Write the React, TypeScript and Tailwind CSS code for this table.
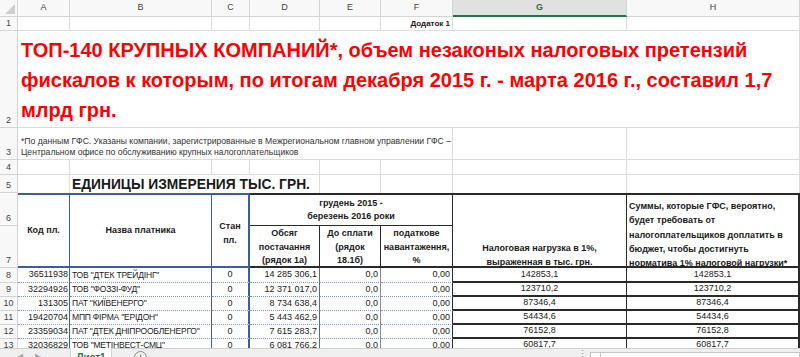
const head = "bg-[#f8f8f8] border-r border-b border-[#d4d4d4] text-[9px] text-[#444]";
const grid = "border-r border-b border-[#dcdcdc]";
const blue = "border-[#3d5d9c]";

const rows = [
  ["36511938", 'ТОВ "ДТЕК ТРЕЙДІНГ"', "0", "14 285 306,1", "0,0", "0,00", "142853,1", "142853,1"],
  ["32294926", 'ТОВ "ФОЗЗІ-ФУД"', "0", "12 371 017,0", "0,0", "0,00", "123710,2", "123710,2"],
  ["131305", 'ПАТ "КИЇВЕНЕРГО"', "0", "8 734 638,4", "0,0", "0,00", "87346,4", "87346,4"],
  ["19420704", 'МПП ФІРМА "ЕРІДОН"', "0", "5 443 462,9", "0,0", "0,00", "54434,6", "54434,6"],
  ["23359034", 'ПАТ "ДТЕК ДНІПРООБЛЕНЕРГО"', "0", "7 615 283,7", "0,0", "0,00", "76152,8", "76152,8"],
  ["32036829", 'ТОВ "МЕТІНВЕСТ-СМЦ"', "0", "6 081 766,2", "0,0", "0,00", "60817,7", "60817,7"],
];

function RowNum({ n }: { n: number }) {
  return <div className={`${head} flex items-end justify-center pb-[2px] leading-none`}>{n}</div>;
}

export default function App() {
  const cols = ["A", "B", "C", "D", "E", "F", "G", "H"];
  return (
    <div className="w-[800px] h-[357px] overflow-hidden bg-white flex flex-col font-['Liberation_Sans',Arial,sans-serif] text-[#1a1a1a]">
      <div className="h-[348px] shrink-0 overflow-hidden grid grid-cols-[18px_52px_142px_38px_70px_61px_72px_174px_173px] grid-rows-[17px_14px_97px_32px_15px_18px_33px_42px_15px_14px_14px_14px_14px_14px]">
        {/* column headers */}
        <div className={`${head} relative`}>
          <svg width="18" height="17" className="absolute inset-0">
            <polygon points="15,4 15,14 5,14" fill="#cfcfcf" />
          </svg>
        </div>
        {cols.map((c) =>
          c === "G" ? (
            <div key={c} className="bg-[#e1e1e1] border-r border-[#d4d4d4] border-b-2 border-b-[#217346] text-[9px] font-bold text-[#217346] flex items-center justify-center">
              {c}
            </div>
          ) : (
            <div key={c} className={`${head} flex items-center justify-center`}>
              {c}
            </div>
          )
        )}

        {/* row 1 */}
        <RowNum n={1} />
        <div className={grid} />
        <div className={grid} />
        <div className={grid} />
        <div className={grid} />
        <div className={grid} />
        <div className={`${grid} flex items-center justify-end pr-[2px] text-[8px] font-bold`}>Додаток 1</div>
        <div className={grid} />
        <div className={grid} />

        {/* row 2 */}
        <RowNum n={2} />
        <div className={`${grid} col-span-8 flex items-end pl-[3px] pb-[2px] text-[20px] leading-[30px] font-bold text-[#ff0000]`}>
          <p>
            ТОП-140 КРУПНЫХ КОМПАНИЙ*, объем незаконых налоговых претензий
            <br />
            фискалов к которым, по итогам декабря 2015 г. - марта 2016 г., составил 1,7
            <br />
            млрд грн.
          </p>
        </div>

        {/* row 3 */}
        <RowNum n={3} />
        <div className={`${grid} col-span-6 flex items-end pl-[3px] pb-px text-[8.6px] leading-[11px] text-[#333]`}>
          <p>
            *По данным ГФС. Указаны компании, зарегистрированные в Межрегиональном главном управлении ГФС –
            <br />
            Центральном офисе по обслуживанию крупных налогоплательщиков
          </p>
        </div>
        <div className={grid} />
        <div className={grid} />

        {/* row 4 */}
        <RowNum n={4} />
        {cols.map((c) => (
          <div key={c} className={grid} />
        ))}

        {/* row 5 */}
        <RowNum n={5} />
        <div className="border-r border-[#dcdcdc]" />
        <div className="col-span-3 border-r border-[#dcdcdc] flex items-end pl-[2px] text-[13.8px] leading-[17px] font-bold whitespace-nowrap">
          ЕДИНИЦЫ ИЗМЕРЕНИЯ ТЫС. ГРН.
        </div>
        <div className="border-r border-[#dcdcdc]" />
        <div className="border-r border-[#dcdcdc]" />
        <div className="border-r border-[#dcdcdc]" />
        <div className="border-r border-[#dcdcdc]" />

        {/* rows 6-7 table header */}
        <RowNum n={6} />
        <div className={`row-span-2 border-t-2 border-b-2 border-r ${blue} flex items-center justify-center text-[9px] font-bold`}>
          Код пл.
        </div>
        <div className={`row-span-2 border-t-2 border-b-2 border-r ${blue} flex items-center justify-center text-[9px] font-bold`}>
          Назва платника
        </div>
        <div className={`row-span-2 border-t-2 border-b-2 border-r-2 ${blue} flex items-center justify-center pt-[4px] text-center text-[9px] leading-[14px] font-bold`}>
          Стан
          <br />
          пл.
        </div>
        <div className="col-span-3 border-t-2 border-b border-r border-[#2a2a2a] flex items-center justify-center text-center text-[9px] leading-[13px] font-bold">
          <p>
            грудень 2015 -
            <br />
            березень 2016 роки
          </p>
        </div>
        <div className="row-span-2 border-t-2 border-b-2 border-r border-[#2a2a2a] flex items-start justify-center pt-[46px] text-center text-[9px] leading-[14px] font-bold">
          <p>
            Налоговая нагрузка в 1%,
            <br />
            выраженная в тыс. грн.
          </p>
        </div>
        <div className="row-span-2 border-t-2 border-b-2 border-r-2 border-[#2a2a2a] flex items-start pl-[2px] pt-[4px] text-[9px] leading-[14.3px] font-bold whitespace-nowrap">
          <p>
            Суммы, которые ГФС, вероятно,
            <br />
            будет требовать от
            <br />
            налогоплательщиков доплатить в
            <br />
            бюджет, чтобы достигнуть
            <br />
            норматива 1% налоговой нагрузки*
          </p>
        </div>
        <RowNum n={7} />
        <div className="border-b-2 border-r border-[#2a2a2a] flex items-start justify-center pt-px text-center text-[9px] leading-[13.5px] font-bold">
          <p>
            Обсяг
            <br />
            постачання
            <br />
            (рядок 1а)
          </p>
        </div>
        <div className="border-b-2 border-r border-[#2a2a2a] flex items-start justify-center pt-px text-center text-[9px] leading-[13.5px] font-bold">
          <p>
            До сплати
            <br />
            (рядок
            <br />
            18.1б)
          </p>
        </div>
        <div className="border-b-2 border-r border-[#2a2a2a] flex items-start justify-center pt-px text-center text-[9px] leading-[13.5px] font-bold whitespace-nowrap">
          <p>
            податкове
            <br />
            навантаження,
            <br />%
          </p>
        </div>

        {/* data rows */}
        {rows.map((r, i) => (
          <div key={i} className="contents">
            <RowNum n={8 + i} />
            <div className="border-r border-r-[#3d5d9c] border-b border-b-[#7c93c4] [border-bottom-style:dotted] flex items-center justify-end pr-px text-[9px]">
              {r[0]}
            </div>
            <div className="border-r border-r-[#3d5d9c] border-b border-b-[#7c93c4] [border-bottom-style:dotted] flex items-center pl-[2px] text-[8.5px] tracking-[-0.2px] whitespace-nowrap">
              {r[1]}
            </div>
            <div className="border-r-2 border-r-[#3d5d9c] border-b border-b-[#7c93c4] [border-bottom-style:dotted] flex items-center justify-center text-[9px]">
              {r[2]}
            </div>
            <div className="border-r border-r-[#56699a] border-b border-b-[#7c93c4] [border-bottom-style:dotted] flex items-center justify-end pr-[2px] text-[9px]">
              {r[3]}
            </div>
            <div className="border-r border-r-[#8a8a8a] border-b border-b-[#7c93c4] [border-bottom-style:dotted] flex items-center justify-end pr-[2px] text-[9px]">
              {r[4]}
            </div>
            <div className="border-r border-r-[#2a2a2a] border-b border-b-[#7c93c4] [border-bottom-style:dotted] flex items-center justify-end pr-[2px] text-[9px]">
              {r[5]}
            </div>
            <div className="border-r border-b-2 border-[#2a2a2a] flex items-center justify-center text-[9px]">{r[6]}</div>
            <div className="border-r-2 border-b-2 border-[#2a2a2a] flex items-center justify-center text-[9px]">{r[7]}</div>
          </div>
        ))}
      </div>

      {/* sheet tabs */}
      <div className="h-[24px] shrink-0 flex items-start bg-[#f0f0f0] border-t border-[#cfcfcf]">
        <div className="w-[70px] flex gap-[12px] pl-[17px] pt-[2px] text-[8px] text-[#a6a6a6]">
          <span>◀</span>
          <span>▶</span>
        </div>
        <div className="w-[42px] h-[18px] -mt-px bg-white border-x border-[#cfcfcf] flex justify-center pt-[2px] text-[10px] font-bold text-[#217346] underline">
          Лист1
        </div>
        <div className="ml-[22px] mt-[2px] w-[13px] h-[13px] rounded-full border border-[#8a8a8a] flex items-center justify-center text-[11px] leading-none text-[#666]">
          +
        </div>
        <div className="ml-auto w-[12px] pt-[1px] text-[9px] leading-none text-[#888]">⋮</div>
        <div className="w-[210px] h-[14px] mt-[3px] bg-white border border-[#c6c6c6] flex">
          <div className="w-[10px] border-r border-[#c6c6c6] flex items-center justify-center text-[6px] text-[#777]">◀</div>
        </div>
      </div>
    </div>
  );
}
